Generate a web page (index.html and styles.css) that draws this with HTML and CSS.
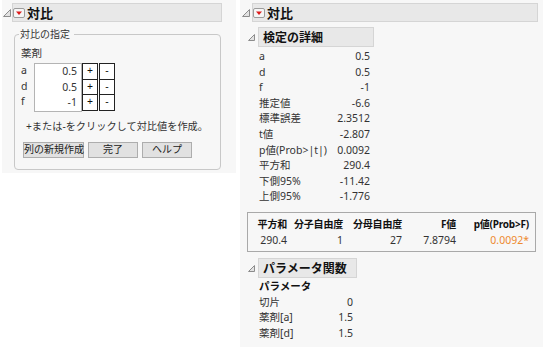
FILE: index.html
```html
<!DOCTYPE html>
<html lang="ja">
<head>
    <meta charset="UTF-8">
    <title>対比</title>
    <link rel="stylesheet" href="styles.css">
</head>
<body>

    <div class="panel left">
        <div class="outline">
            <span class="disc"><svg width="8" height="8" viewBox="0 0 8 8"><polygon points="7.5,0.5 7.5,7.5 0.5,7.5" fill="#e2e2e2" stroke="#8c8c8c"/></svg></span>
            <div class="bar">
                <span class="menu"><svg width="12" height="10" viewBox="0 0 12 10"><rect x="0.5" y="0.5" width="11" height="9" rx="1.5" fill="#f6f6f6" stroke="#9c9c9c"/><polygon points="3,3.5 9,3.5 6,7" fill="#dd1c1c"/></svg></span>
                対比
            </div>
        </div>

        <fieldset class="spec">
            <legend>対比の指定</legend>
            <div class="factor">薬剤</div>
            <div class="coef">
                <div class="levels">
                    <div>a</div>
                    <div>d</div>
                    <div>f</div>
                </div>
                <div class="values">
                    <div>0.5</div>
                    <div>0.5</div>
                    <div>-1</div>
                </div>
                <div class="pm">
                    <span>+</span><span>-</span>
                    <span>+</span><span>-</span>
                    <span>+</span><span>-</span>
                </div>
            </div>
            <p class="hint">+または-をクリックして対比値を作成。</p>
            <div class="buttons">
                <button class="btn wide">列の新規作成</button>
                <button class="btn">完了</button>
                <button class="btn">ヘルプ</button>
            </div>
        </fieldset>
    </div>

    <div class="panel right">
        <div class="outline">
            <span class="disc"><svg width="8" height="8" viewBox="0 0 8 8"><polygon points="7.5,0.5 7.5,7.5 0.5,7.5" fill="#e2e2e2" stroke="#8c8c8c"/></svg></span>
            <div class="bar">
                <span class="menu"><svg width="12" height="10" viewBox="0 0 12 10"><rect x="0.5" y="0.5" width="11" height="9" rx="1.5" fill="#f6f6f6" stroke="#9c9c9c"/><polygon points="3,3.5 9,3.5 6,7" fill="#dd1c1c"/></svg></span>
                対比
            </div>
        </div>

        <div class="content">
            <div class="sub">
                <span class="sub-disc"><svg width="7" height="7" viewBox="0 0 7 7"><polygon points="6.5,0.5 6.5,6.5 0.5,6.5" fill="#e2e2e2" stroke="#8c8c8c"/></svg></span>
                <div class="sub-bar">検定の詳細</div>
                <div class="stats test">
                    <span>a</span><span class="num">0.5</span>
                    <span>d</span><span class="num">0.5</span>
                    <span>f</span><span class="num">-1</span>
                    <span>推定値</span><span class="num">-6.6</span>
                    <span>標準誤差</span><span class="num">2.3512</span>
                    <span>t値</span><span class="num">-2.807</span>
                    <span>p値(Prob&gt;|t|)</span><span class="num">0.0092</span>
                    <span>平方和</span><span class="num">290.4</span>
                    <span>下側95%</span><span class="num">-11.42</span>
                    <span>上側95%</span><span class="num">-1.776</span>
                </div>
            </div>

            <div class="ftest">
                <span class="th">平方和</span>
                <span class="th">分子自由度</span>
                <span class="th">分母自由度</span>
                <span class="th">F値</span>
                <span class="th">p値(Prob&gt;F)</span>
                <span>290.4</span>
                <span>1</span>
                <span>27</span>
                <span>7.8794</span>
                <span class="sig">0.0092*</span>
            </div>

            <div class="sub">
                <span class="sub-disc"><svg width="7" height="7" viewBox="0 0 7 7"><polygon points="6.5,0.5 6.5,6.5 0.5,6.5" fill="#e2e2e2" stroke="#8c8c8c"/></svg></span>
                <div class="sub-bar">パラメータ関数</div>
                <div class="stats params">
                    <span class="th">パラメータ</span><span></span>
                    <span>切片</span><span class="num">0</span>
                    <span>薬剤[a]</span><span class="num">1.5</span>
                    <span>薬剤[d]</span><span class="num">1.5</span>
                </div>
            </div>
        </div>
    </div>

</body>
</html>
```

FILE: styles.css
```css
body {
    margin: 0;
    display: flex;
    align-items: flex-start;
    background: #fff;
    font-family: "Noto Sans", "Noto Sans CJK JP", sans-serif;
    font-size: 10.5px;
    color: #333;
}

.panel {
    background: #f7f7f7;
}

.left {
    width: 234px;
    margin-left: 2px;
    padding-bottom: 3px;
}

.right {
    flex: 1;
    height: 347px;
    margin-left: 4px;
}

/* outline header */
.outline {
    display: flex;
    padding-top: 3px;
}

.disc {
    width: 12px;
    display: flex;
    align-items: flex-end;
    justify-content: center;
    padding-bottom: 5px;
    box-sizing: border-box;
}

.left .disc {
    width: 10px;
}

.bar {
    flex: 1;
    height: 19px;
    box-sizing: border-box;
    display: flex;
    align-items: center;
    background: #e8e8e8;
    border: 1px solid #d5d5d5;
    font-size: 13px;
    font-weight: bold;
    color: #111;
}

.left .bar {
    margin-right: 14px;
}

.right .bar {
    margin-right: 5px;
}

.menu {
    display: flex;
    margin-right: 2px;
}

/* contrast spec */
.spec {
    margin: 6px 15px 0 12px;
    padding: 0 6px 11px 6px;
    border: 1px solid #c8c8c8;
    border-radius: 4px;
}

.spec legend {
    margin-left: -2px;
    padding: 0 4px 0 1px;
    line-height: 12px;
    font-size: 10px;
}

.factor {
    margin-top: 6px;
    line-height: 15px;
}

.coef {
    display: flex;
    margin-top: 2px;
}

.levels {
    width: 13px;
    line-height: 15.5px;
}

.values {
    width: 48px;
    box-sizing: border-box;
    background: #fff;
    border: 1px solid #b4b4b4;
    text-align: right;
    padding-right: 4px;
    line-height: 15.5px;
}

.pm {
    display: grid;
    grid-template-columns: 16px 16px;
    grid-auto-rows: 15.5px;
    column-gap: 1px;
}

.pm span {
    border: 1px solid #222;
    margin-bottom: -1px;
    background: #fff;
    text-align: center;
    line-height: 13px;
    color: #111;
}

.hint {
    margin: 7px 0 0 5px;
    line-height: 15px;
    font-size: 10.2px;
}

.buttons {
    display: flex;
    gap: 4px;
    margin: 8px 0 0 2px;
}

.btn {
    width: 50px;
    height: 16px;
    padding: 0;
    font: inherit;
    font-size: 10px;
    line-height: 13px;
    white-space: nowrap;
    color: #222;
    background: #e1e1e1;
    border: 1px solid #adadad;
}

.btn.wide {
    width: 61px;
}

/* report */
.content {
    padding-left: 6px;
}

.sub {
    display: grid;
    grid-template-columns: 12px max-content;
    margin-top: 5px;
}

.sub-disc {
    display: flex;
    align-items: flex-end;
    padding: 0 0 6px 2px;
}

.sub-bar {
    height: 20px;
    box-sizing: border-box;
    display: flex;
    align-items: center;
    padding-left: 4px;
    background: #e8e8e8;
    border: 1px solid #d5d5d5;
    font-size: 12px;
    font-weight: bold;
    color: #111;
}

.stats {
    grid-column: 2;
    display: grid;
    padding: 2px 4px 0 1px;
    line-height: 15.6px;
    white-space: nowrap;
}

.test {
    grid-template-columns: 74px 37px;
}

.params {
    grid-template-columns: 60px 34px;
    padding-top: 1px;
}

.num {
    text-align: right;
}

.th {
    font-weight: bold;
    color: #111;
}

.ftest {
    display: grid;
    grid-template-columns: 30px 56px 59px 54px 73px;
    grid-auto-rows: 16px;
    align-items: center;
    width: 289px;
    box-sizing: border-box;
    margin: 7px 0 0 1px;
    padding: 3px 6px 3px 9px;
    border: 1px solid #a9a9a9;
    text-align: right;
    white-space: nowrap;
}

.ftest .th {
    font-size: 10px;
    letter-spacing: -0.2px;
}

.ftest + .sub {
    margin-top: 6px;
}

.sig {
    color: #ee8a2e;
}
```
